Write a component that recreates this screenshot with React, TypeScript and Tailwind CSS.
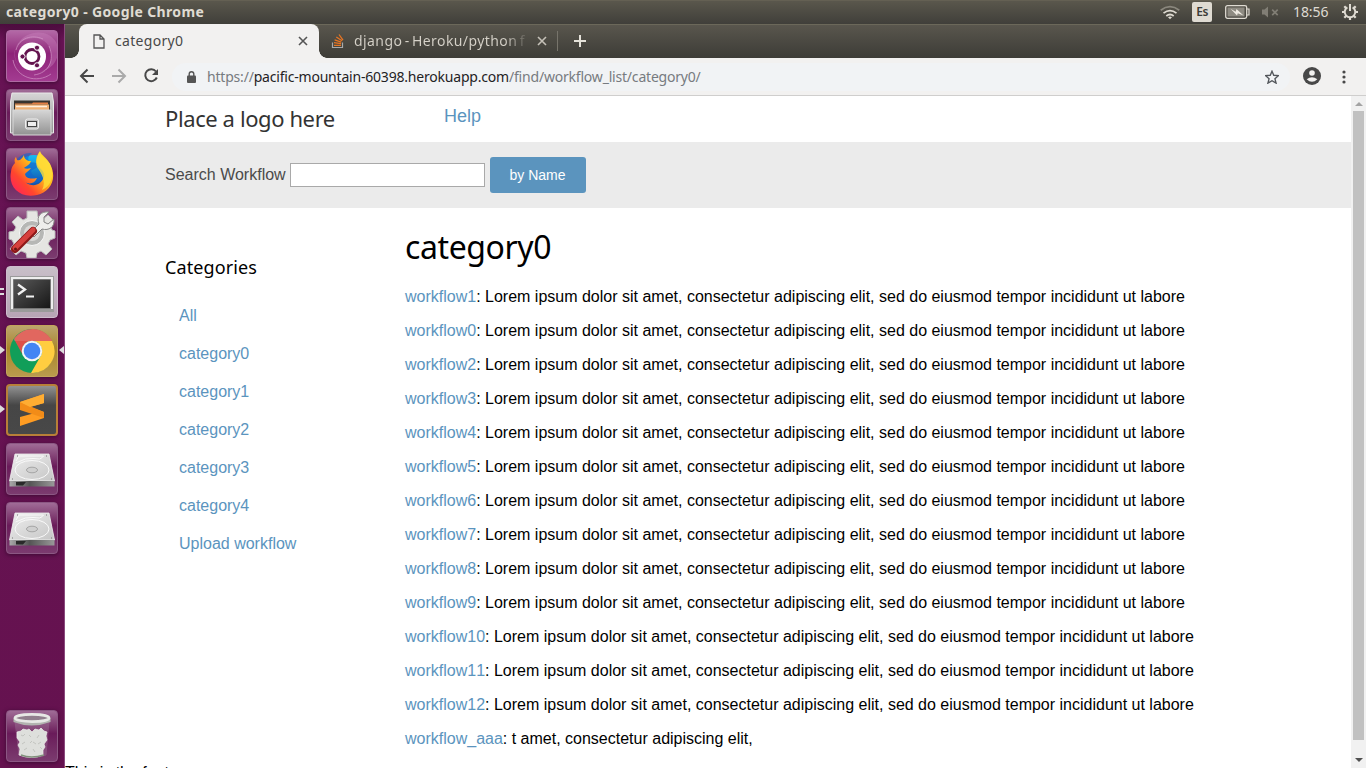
import React, { ReactNode } from 'react';

const LOREM = 'Lorem ipsum dolor sit amet, consectetur adipiscing elit, sed do eiusmod tempor incididunt ut labore';
const ORDER = [1, 0, 2, 3, 4, 5, 6, 7, 8, 9, 10, 11, 12];
const WORKFLOWS = [
  ...ORDER.map((n) => ({ name: `workflow${n}`, text: LOREM })),
  { name: 'workflow_aaa', text: 't amet, consectetur adipiscing elit,' },
];
const CATEGORIES = ['All', 'category0', 'category1', 'category2', 'category3', 'category4', 'Upload workflow'];

function SystemBar() {
  return (
    <header className="flex h-6 shrink-0 items-center bg-gradient-to-b from-[#5b584d] to-[#403f3a] pl-[6px] text-[#dfdbd2] shadow-[inset_0_1px_0_#646053]">
      <span className="w-[210px] whitespace-nowrap text-[14px] leading-6 font-bold tracking-[0.36px]">category0 - Google Chrome</span>
      <svg className="ml-[944px] mt-px" width="20" height="16" viewBox="0 0 20 16" fill="none" strokeWidth="1.7">
        <path d="M.7 5.2Q10-1.8 19.3 5.2" stroke="#8a877d" />
        <path d="M3.5 8.2Q10 3 16.5 8.2M6.3 11Q10 8 13.7 11" stroke="#dfdbd2" />
        <path d="m8 12.2 2 2 2-2Q10 10.7 8 12.2" fill="#dfdbd2" />
      </svg>
      <span className="ml-[12px] flex h-5 w-5 items-center justify-center rounded-[2px] bg-[#dfdbd2] text-[12px] font-semibold tracking-[-0.5px] text-[#3c3b37]">Es</span>
      <svg className="ml-[13px]" width="25" height="14" viewBox="0 0 25 14">
        <rect x=".7" y=".7" width="21" height="12.6" rx="1.8" fill="none" stroke="#dfdbd2" strokeWidth="1.3" />
        <path d="M22 4h2v6h-2" fill="none" stroke="#dfdbd2" strokeWidth="1.2" />
        <path d="M2.5 2.5h17v9h-17z" fill="#8e8b82" />
        <path d="m5.5 3.7 5.2 3 .8-2.7 7 6.4-5.7-2.2-.8 2.4z" fill="#eeeae2" />
      </svg>
      <svg className="ml-[11px]" width="20" height="14" viewBox="0 0 20 14">
        <path d="M1 4.5h2.5L7 1.5v11L3.5 9.5H1z" fill="#817e75" />
        <path d="m11.2 4.7 5.5 5.5m0-5.5-5.5 5.5" stroke="#817e75" strokeWidth="1.7" />
      </svg>
      <span className="ml-[12px] w-[38px] whitespace-nowrap text-[14px] leading-6 tracking-[-0.1px]">18:56</span>
      <svg className="ml-[10px]" width="18" height="18" viewBox="0 0 18 18" fill="none" stroke="#dfdbd2">
        <path d="M6.4 4.3A5.3 5.3 0 1 0 11.6 4.3" strokeWidth="2" />
        <path d="M9 1v7" strokeWidth="2" />
        <path d="m3.3 3.3 2 2m7.4 0 2-2M1 9h3m10 0h3M3.3 14.7l2-2m7.4 0 2 2M9 14v3" strokeWidth="2.2" />
      </svg>
    </header>
  );
}

function Tile({ children, tone = 'bg-gradient-to-b from-[#a06c97] via-[#6a1b5a] via-45% to-[#7b3b6f] border-[#8b5783]' }: { children: ReactNode; tone?: string }) {
  return (
    <div className={`h-[52px] w-[52px] shrink-0 overflow-hidden rounded-[4px] border shadow-[0_1px_4px_#3d0b34] ${tone}`}>
      <svg width="50" height="50" viewBox="1 1 50 50">{children}</svg>
    </div>
  );
}

function Drive() {
  return (
    <Tile>
      <path d="M9 11h34l5.5 27H3.5z" fill="url(#silver)" stroke="#f1f1f1" strokeWidth=".8" />
      <path d="M3.5 38h45v5.5h-45z" fill="url(#driveEdge)" />
      <path d="M10 39h10l-3 3.5h-7z" fill="#292929" />
      <ellipse cx="26" cy="27" rx="17" ry="9.5" fill="none" stroke="#f9f9f9" strokeWidth="1" />
      <path d="M9.5 20q5-2 10-4 8-1 14 0 3-1 4-3H13l-3 5" fill="none" stroke="#f9f9f9" />
      <ellipse cx="26" cy="27" rx="5.5" ry="2.8" fill="#cfcfcf" stroke="#a5a5a5" />
      <path d="M6 36h1m38 0h1M11 13h1m28 0h1" stroke="#777" strokeWidth="1.2" />
    </Tile>
  );
}

function Launcher() {
  return (
    <nav className="relative flex w-[65px] shrink-0 flex-col gap-[7px] border-r border-[#8a4a7d] bg-gradient-to-b from-[#4c0c3e] via-[#671354] via-2% to-[#65124f] pt-[6px] pl-[6px]">
      <svg width="0" height="0" className="absolute">
        <defs>
          <linearGradient id="silver" x2="1" y2="1"><stop stopColor="#eeeeee" /><stop offset="1" stopColor="#c5c5c5" /></linearGradient>
          <linearGradient id="driveEdge"><stop stopColor="#a9a9a9" /><stop offset=".45" stopColor="#555" /><stop offset="1" stopColor="#999" /></linearGradient>
          <linearGradient id="cabinet" x2="0" y2="1"><stop stopColor="#d6d6d6" /><stop offset="1" stopColor="#929292" /></linearGradient>
          <linearGradient id="fire" x1="1" x2="0" y2="1"><stop stopColor="#ffe540" /><stop offset=".42" stopColor="#ffb51a" /><stop offset=".7" stopColor="#ff462e" /><stop offset="1" stopColor="#ff1768" /></linearGradient>
          <linearGradient id="globe" x2="0" y2="1"><stop stopColor="#15bdf4" /><stop offset="1" stopColor="#143b9d" /></linearGradient>
          <linearGradient id="screen" x2="1" y2="1"><stop stopColor="#595959" /><stop offset="1" stopColor="#161616" /></linearGradient>
        </defs>
      </svg>
      <Tile tone="bg-gradient-to-b from-[#b368a6] via-[#8e2379] via-45% to-[#a33b91] border-[#ae6aa3]">
        <path d="M15 39C2 25 9 9 28 8c12 0 19 10 17 22-2 8-7 11-11 12 14-3 22-16 16-30C41-3 20 2 14 11 6 20 8 31 15 39" fill="#c880bc" opacity=".42" />
        <path d="M10 20C13 8 26 4 37 9M7 30c3 18 24 24 38 14M28 45c15-2 21-15 15-29" fill="none" stroke="#d69bcb" opacity=".65" />
        <circle cx="26" cy="26.5" r="14" fill="#fff" />
        <circle cx="26" cy="26.5" r="7" fill="none" stroke="#64144f" strokeWidth="2.8" />
        <g fill="#64144f" stroke="#fff" strokeWidth="1"><circle cx="16.5" cy="26.5" r="2.6" /><circle cx="31" cy="17.7" r="2.6" /><circle cx="31" cy="35.3" r="2.6" /></g>
      </Tile>
      <Tile>
        <path d="M6 4h40l1.5 9v31h-43V13z" fill="url(#cabinet)" stroke="#e9e9e9" />
        <path d="M8 11.5h36V21H8z" fill="#373430" />
        <path d="M9 14.5h17l1-1h15v2H9z" fill="#e58045" /><path d="M9 15.5h34V21H9z" fill="#f0b276" /><path d="M10 17.5h31" stroke="#fff0df" strokeWidth="1.5" />
        <path d="M7 21h38v25H7z" fill="url(#cabinet)" stroke="#d8d8d8" />
        <rect x="19.5" y="30" width="13" height="10" rx="2" fill="#bdbdbd" stroke="#eee" />
        <rect x="21.5" y="32.5" width="9" height="5" fill="#eee" stroke="#444" />
      </Tile>
      <Tile>
        <circle cx="28" cy="25" r="18" fill="url(#globe)" />
        <path d="M11 11c5-5 9-6 15-6-4 3-5 6-2 9 3 1 7 0 9 3-1 3-6 4-8 6 1 4 3 6 7 6 4 1 6-2 8-2-3 7-9 9-16 8C16 34 14 25 16 19c-3-1-4-4-5-8" fill="#1164ce" opacity=".6" />
        <path d="M11 12c3 1 5-1 7-5 0 4 3 6 7 6-1 4-5 5-7 7 2 1 4 1 7 0-2 3-5 4-6 6 1 5 6 5 12 4-2 5-7 7-12 4 8 6 16 3 19-5 1-7-5-8-7-13-2-6 1-10 3-13 1 4 7 7 10 13 8 15 0 28-13 31C13 51 2 38 5 24c0-4 2-7 4-9-1-3 0-5 1-6z" fill="url(#fire)" />
        <path d="M34 4c1 5 7 7 10 12 5 12 1 22-8 26 5-9-1-17-5-23-2-6 0-10 3-15" fill="#ffdf38" opacity=".8" />
      </Tile>
      <Tile>
        <g transform="translate(26 26)">
          <path d="M-5-22H5l1 6 5 2 5-4 6 6-4 5 2 4 3 1v7l-5 2-2 4 4 5-6 6-5-4-4 2-1 5H-5l-1-5-5-2-5 4-6-6 4-5-2-4-3-1v-7l5-1 2-4-4-5 6-6 5 4 4-2z" fill="#e5e5e2" stroke="#bcbcbc" />
          <circle r="12.5" fill="#b6b7b5" stroke="#f8f8f8" /><circle r="8" fill="#d9d8d6" />
        </g>
        <path d="m24 26 9-9C30 9 35 4 43 5l-5 5v5l4 2 6-5c1 8-5 12-12 10l-8 8z" fill="#eeeeec" stroke="#858585" />
        <path d="m9 42 18-18" stroke="#8e1919" strokeWidth="8" strokeLinecap="round" />
        <path d="m9 41 18-18" stroke="#d6403d" strokeWidth="5" strokeLinecap="round" />
        <circle cx="9.5" cy="42" r="1.5" fill="#641515" />
      </Tile>
      <Tile tone="bg-gradient-to-b from-[#c8bfc8] to-[#b7a4b5] border-[#cfbdce]">
        <path d="M4 10h44v36H4z" fill="#9a9a9a" /><path d="M5 11h42v32H5z" fill="#eee" /><path d="M7.5 13.5h37v29h-37z" fill="url(#screen)" stroke="#777" />
        <path d="m12 18.5 7 5-7 5" fill="none" stroke="#f1f1f1" strokeWidth="2.3" /><path d="M20 30.5h8" stroke="#f1f1f1" strokeWidth="2" />
      </Tile>
      <Tile tone="bg-gradient-to-b from-[#bca56d] via-[#a98727] via-45% to-[#b99b4d] border-[#c3a55a]">
        <circle cx="26" cy="26" r="22" fill="#119e59" />
        <path d="M8 14a22 22 0 0 1 38 2H26a10 10 0 0 0-8.7 15z" fill="#dd5148" />
        <path d="M46 16a22 22 0 0 1-21 32l9.7-17A10 10 0 0 0 26 16z" fill="#ffcd40" />
        <path d="M8 14a22 22 0 0 1 38 2H8" fill="#fff" opacity=".13" />
        <circle cx="26" cy="26" r="10.3" fill="#f4f4f4" /><circle cx="26" cy="26" r="8.3" fill="#4285f4" />
      </Tile>
      <Tile tone="bg-gradient-to-b from-[#929292] via-[#464646] via-40% to-[#484848] border-2 border-[#b87f38]">
        <g transform="translate(-1 -1)">
          <path d="m14 18 24-8v9l-14 4 14 5v6l-24 8v-9l15-4-15-4z" fill="#ff9c22" />
          <path d="m14 18 24 10v6l-24-8z" fill="#f28c18" />
          <path d="m14 18 24-8v9l-14 4z" fill="#ffad32" />
        </g>
      </Tile>
      <Drive />
      <Drive />
      <div className="mt-[149px]">
        <Tile>
          <path d="M9 11h34l-3 34q-13 5-27 0z" fill="#b69eb2" opacity=".25" stroke="#bda4ba" />
          <path d="m11 22 4-1 2-2 4 1 2-1 3 3 3-3 4 1 2-2 3 3 3 1-1 4 1 4-3 4 1 3-2 3v5q-11 5-24 0l1-6-2-4 2-3-3-4z" fill="#dedfdc" stroke="#efefed" strokeWidth=".7" />
          <path d="m15 25 2 1 2-2m0 8-3 2m7-9 2 2m2 5 3 2m3-9-2 3m4 4-3 2m-11 4-3 2m9-1 2 3m5-5 2 2m-10-8-2 2" fill="none" stroke="#c3c4c0" />
          <path d="M15 45q10 4 23 0" fill="none" stroke="#81917c" strokeWidth="1.5" />
          <path d="M7.5 8v4q18 7 37 0V8" fill="#b2b4b0" />
          <ellipse cx="26" cy="8" rx="17" ry="3.6" fill="#917f8d" stroke="#e7e8e5" strokeWidth="2.7" />
        </Tile>
      </div>
      <i className="absolute top-[264px] left-0 h-[7px] w-[4px] border-y-2 border-[#ddd]" />
      <i className="absolute top-[322px] left-0 h-0 w-0 border-y-[4px] border-l-[5px] border-y-transparent border-l-[#ddd]" />
      <i className="absolute top-[381px] left-0 h-0 w-0 border-y-[4px] border-l-[5px] border-y-transparent border-l-[#ddd]" />
      <i className="absolute top-[322px] right-0 h-0 w-0 border-y-[4px] border-r-[5px] border-y-transparent border-r-[#ddd]" />
    </nav>
  );
}

function TabStrip() {
  return (
    <div className="flex h-[34px] shrink-0 items-center bg-gradient-to-b from-[#5a574e] to-[#3d3c37] pl-[14px] shadow-[inset_0_1px_0_#6b685a]">
      <div className="relative flex h-[34px] w-[240px] items-center rounded-t-[8px] bg-[#f2f1f0] pl-[14px] text-[#494949]">
        <i className="absolute bottom-0 -left-2 h-2 w-2 bg-[radial-gradient(circle_at_0_0,transparent_7.5px,#f2f1f0_8px)]" />
        <i className="absolute bottom-0 -right-2 h-2 w-2 bg-[radial-gradient(circle_at_100%_0,transparent_7.5px,#f2f1f0_8px)]" />
        <svg width="12" height="15" viewBox="0 0 12 15" fill="none" stroke="#555" strokeWidth="1.3"><path d="M1 1h6l4 4v9H1zM7 1v4h4" /></svg>
        <span className="relative -top-px ml-[10px] w-[180px] text-[14px] tracking-[0.3px]">category0</span>
        <svg className="ml-[3px]" width="10" height="10" viewBox="0 0 10 10" stroke="#555" strokeWidth="1.6"><path d="m1 1 8 8m0-8L1 9" /></svg>
      </div>
      <svg className="ml-[12px]" width="14" height="16" viewBox="0 0 14 16" fill="none">
        <path d="M1.5 9.5v5h10v-5" stroke="#aaa" strokeWidth="1.2" />
        <path d="M3 12.3h7M3 9.7l7 1M3.6 6.9l6.7 2.2M5.3 4l5.7 3.8M8 1.5l4 5.7" stroke="#e87522" strokeWidth="1.3" />
      </svg>
      <span className="relative -top-px ml-[9px] w-[175px] overflow-hidden whitespace-nowrap bg-gradient-to-r from-[#d6d2c9] from-86% to-transparent bg-clip-text text-[14px] tracking-[0.42px] [word-spacing:-1.7px] text-transparent">django - Heroku/python f</span>
      <svg className="ml-[8px]" width="10" height="10" viewBox="0 0 10 10" stroke="#c5c1b8" strokeWidth="1.6"><path d="m1 1 8 8m0-8L1 9" /></svg>
      <i className="ml-[10px] h-5 w-px bg-[#77746b]" />
      <svg className="ml-[16px]" width="12" height="12" viewBox="0 0 12 12" stroke="#e5e2da" strokeWidth="2"><path d="M6 0v12M0 6h12" /></svg>
    </div>
  );
}

function Toolbar() {
  return (
    <div className="flex h-[38px] shrink-0 items-center border-b border-[#cfcecd] bg-[#f2f1f0] pl-[14px]">
      <svg className="-mt-px" width="16" height="16" viewBox="0 0 16 16" fill="none" stroke="#484848" strokeWidth="2"><path d="M15 8H2m6.5-6.5L2 8l6.5 6.5" /></svg>
      <svg className="-mt-px ml-[16px]" width="16" height="16" viewBox="0 0 16 16" fill="none" stroke="#aaa" strokeWidth="2"><path d="M1 8h13M7.5 1.5 14 8l-6.5 6.5" /></svg>
      <svg className="-mt-px mr-px ml-[16px]" width="16" height="16" viewBox="0 0 16 16" fill="none"><path d="M13 3.5A6 6 0 1 0 13.8 9.5" stroke="#484848" strokeWidth="2" /><path d="M15 1v6H9z" fill="#484848" /></svg>
      <div className="ml-[12px] flex h-7 w-[1118px] items-center rounded-full bg-[#f1f3f5] pl-[15px]">
        <svg width="9" height="12" viewBox="0 0 9 12"><path d="M2.2 5V3a2.3 2.3 0 0 1 4.6 0v2" fill="none" stroke="#555" strokeWidth="1.4" /><rect y="4.5" width="9" height="7.5" rx="1" fill="#555" /></svg>
        <span className="ml-[11px] w-[1050px] whitespace-nowrap text-[14px] tracking-[-0.2px] text-[#777b80]">https://<b className="font-normal text-[#1f2224]">pacific-mountain-60398.herokuapp.com</b>/find/workflow_list/category0/</span>
        <svg className="ml-[8px]" width="14" height="14" viewBox="0 0 24 24" fill="none" stroke="#52565b" strokeWidth="2.3"><path d="m12 2 3 7 8 .7-6 5.2 2 7.6-7-4.2-7 4.2 2-7.6-6-5.2L9 9z" /></svg>
      </div>
      <svg className="-mt-[2px] ml-[13px]" width="18" height="18" viewBox="0 0 18 18"><circle cx="9" cy="9" r="9" fill="#484848" /><circle cx="9" cy="6" r="2.8" fill="#f2f1f0" /><path d="M3.7 12.2q5.3-3.8 10.6 0Q9 17.5 3.7 12.2" fill="#f2f1f0" /></svg>
      <svg className="ml-[21px]" width="4" height="14" viewBox="0 0 4 14" fill="#484848"><circle cx="2" cy="2" r="1.6" /><circle cx="2" cy="7" r="1.6" /><circle cx="2" cy="12" r="1.6" /></svg>
    </div>
  );
}

function Page() {
  return (
    <div className="flex min-h-0 flex-1 bg-white">
      <div className="flex h-[672px] w-[1286px] flex-col overflow-hidden font-['Liberation_Sans',sans-serif] text-[16px] text-black">
        <div className="flex h-[46px] shrink-0 pl-[100px]">
          <h2 className="w-[279px] whitespace-nowrap pt-[6px] font-['Noto_Sans',sans-serif] text-[22px] leading-8 tracking-[-0.4px] text-[#333]">Place a logo here</h2>
          <a className="pt-[8px] text-[18px] leading-6 text-[#5b94be]">Help</a>
        </div>
        <form className="flex h-[66px] shrink-0 items-center bg-[#ebebeb] pl-[100px] text-[#4a4a4a]">
          <label className="w-[125px] whitespace-nowrap">Search Workflow</label>
          <input className="h-6 w-[195px] border border-[#a9a9a9] bg-white" aria-label="Search Workflow" />
          <button type="button" className="ml-[5px] h-9 w-24 rounded-[3px] bg-[#5b94be] pr-px text-[14px] text-white">by Name</button>
        </form>
        <div className="flex h-[556px] shrink-0 pl-[100px]">
          <aside className="w-[240px] shrink-0">
            <h3 className="mt-[47px] mb-[18px] font-['Noto_Sans',sans-serif] text-[18px] leading-6 tracking-[0.1px]">Categories</h3>
            <ul className="pl-[14px] leading-[38px] text-[#5b94be]">
              {CATEGORIES.map((name) => <li key={name}><a>{name}</a></li>)}
            </ul>
          </aside>
          <main>
            <h1 className="mt-[19px] mb-[13px] font-['Noto_Sans',sans-serif] text-[32px] leading-10 tracking-[-0.4px]">category0</h1>
            {WORKFLOWS.map(({ name, text }) => <p key={name} className="whitespace-nowrap leading-[34px]"><a className="text-[#5b94be] [font-kerning:none]">{name}</a>: {text}</p>)}
          </main>
        </div>
        <footer className="shrink-0 leading-[18px]">This is the footer</footer>
      </div>
      <div className="flex w-[15px] flex-col items-center bg-[#f1f1f1]">
        <i className="mt-[6px] h-0 w-0 border-x-[4px] border-b-[4px] border-x-transparent border-b-[#a3a3a3]" />
        <div className="mt-[5px] h-[629px] w-[11px] bg-[#c1c1c1]" />
        <i className="mt-[18px] h-0 w-0 border-x-[4px] border-t-[4px] border-x-transparent border-t-[#505050]" />
      </div>
    </div>
  );
}

export default function App() {
  return (
    <div className="flex h-[768px] w-[1366px] flex-col overflow-hidden bg-white font-['Noto_Sans',sans-serif]">
      <SystemBar />
      <div className="flex min-h-0 flex-1">
        <Launcher />
        <div className="flex min-w-0 flex-1 flex-col">
          <TabStrip />
          <Toolbar />
          <Page />
        </div>
      </div>
    </div>
  );
}
